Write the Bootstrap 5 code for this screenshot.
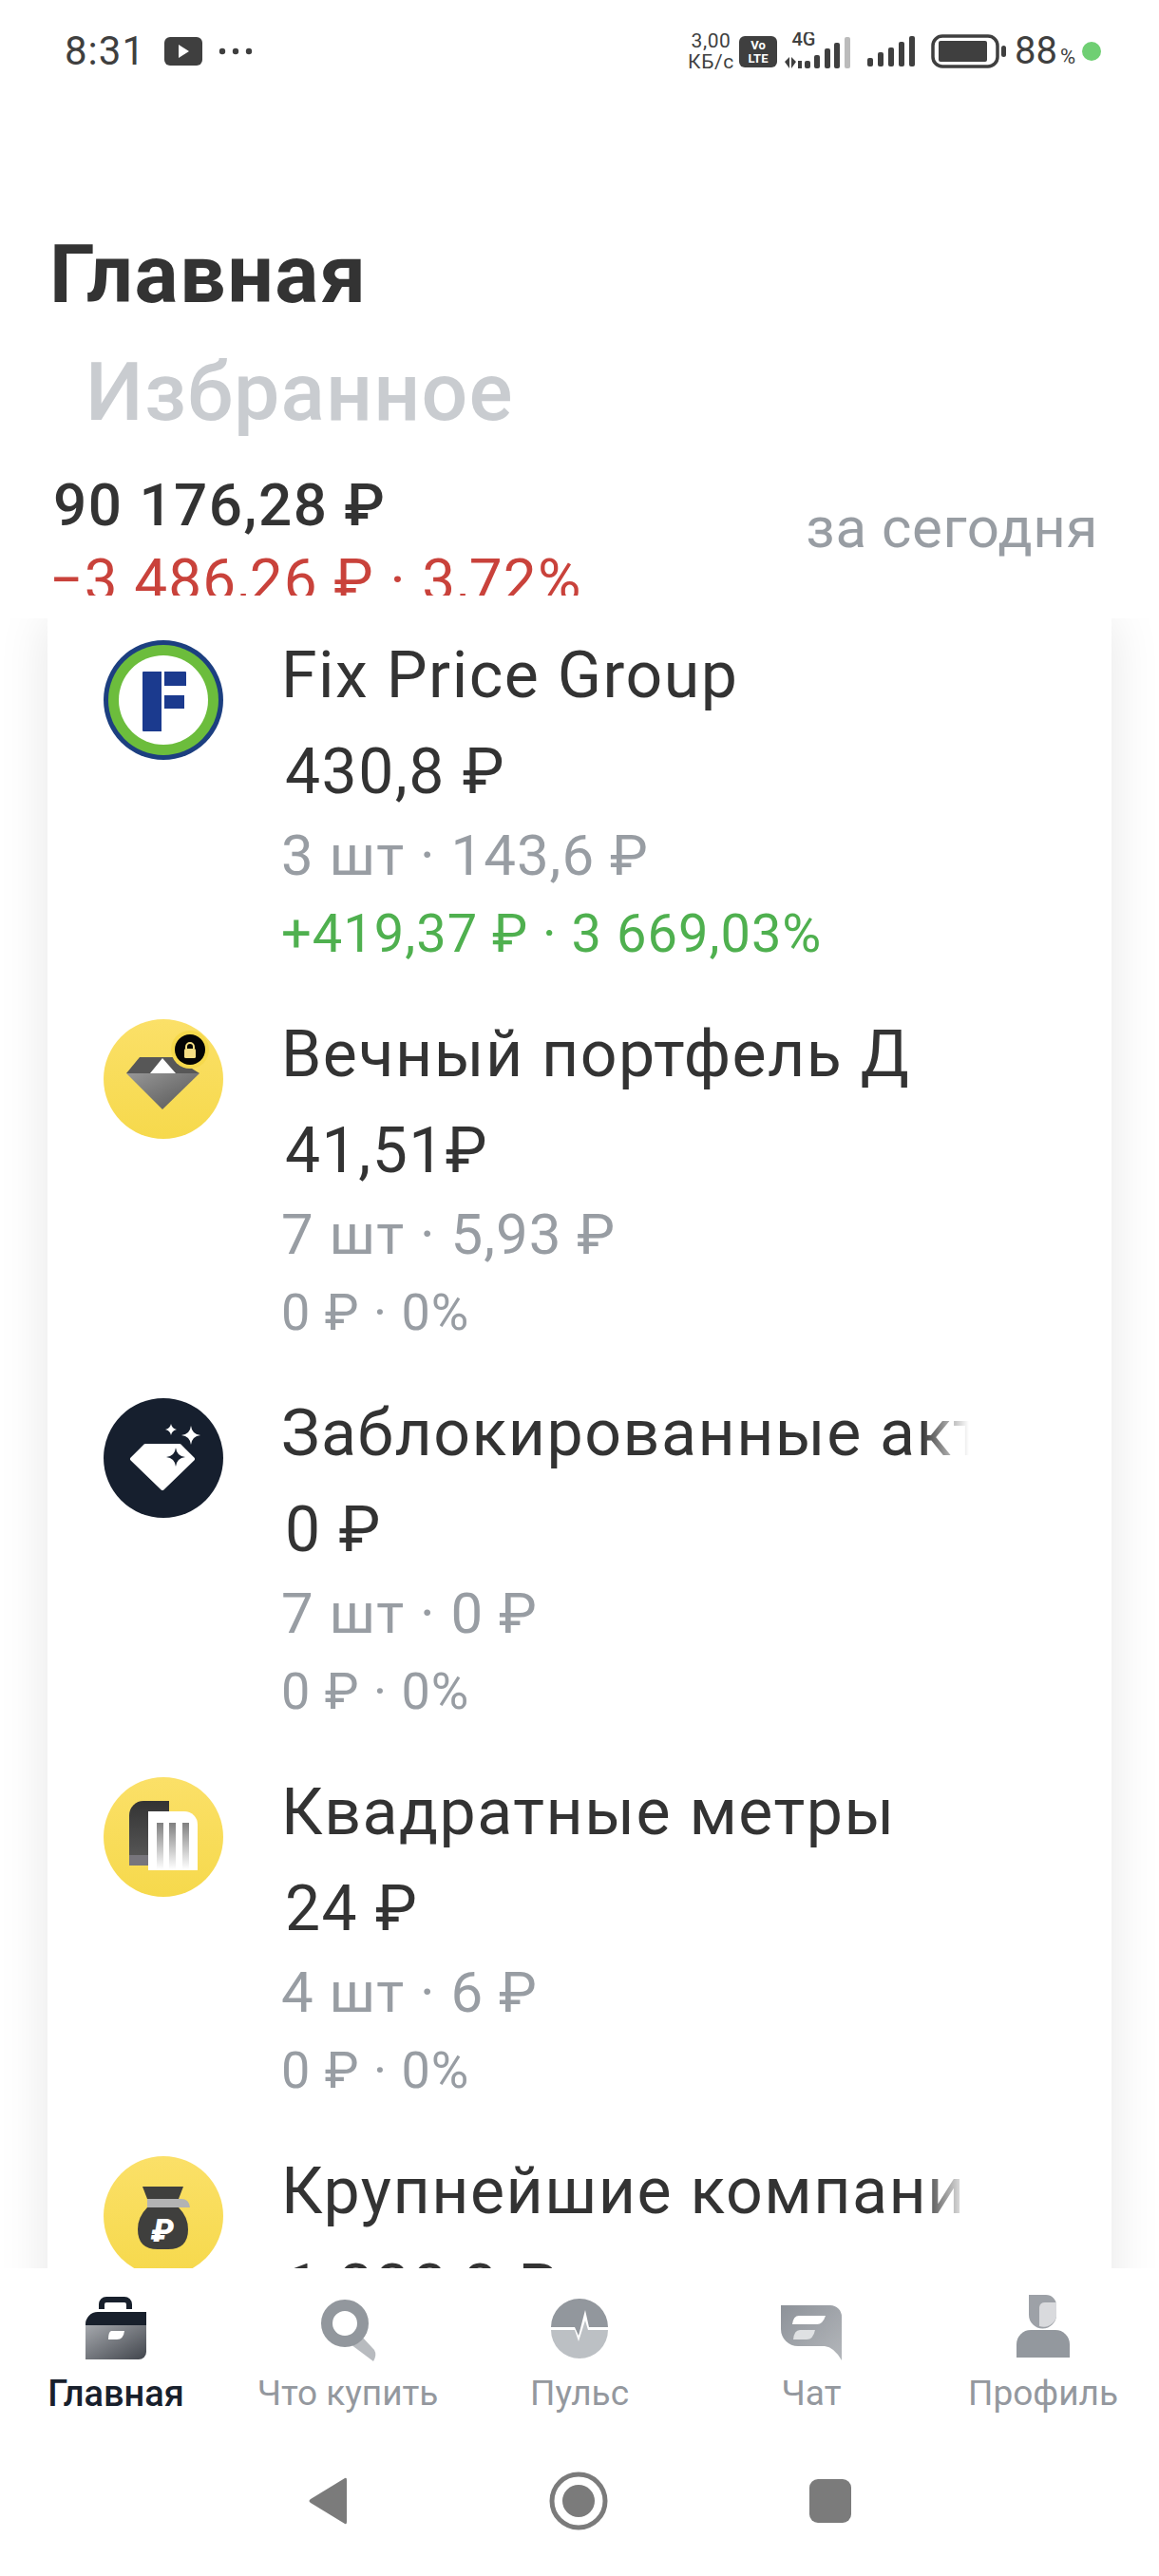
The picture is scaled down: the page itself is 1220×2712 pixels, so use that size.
<!DOCTYPE html>
<html lang="ru">
<head>
  <meta charset="UTF-8" />
  <meta name="viewport" content="width=device-width, initial-scale=1" />
  <title>Главная</title>
  <link href="https://cdn.jsdelivr.net/npm/bootstrap@5.3.0/dist/css/bootstrap.min.css" rel="stylesheet" />
  <style>
    body {
      margin: 0;
      background: #fff;
      font-family: Roboto, "Noto Sans", sans-serif;
      color: #333;
    }
    .app-screen { width: 1220px; height: 2712px; overflow: hidden; }

    .status-bar { height: 108px; padding: 0 61px 0 68px; color: #3f3f3f; }
    .status-time { font-size: 42px; line-height: 1; letter-spacing: 1px; margin-right: 20px; }
    .status-speed { font-size: 21px; line-height: 22px; margin-right: 5px; letter-spacing: .6px; }
    .status-level { font-size: 40px; line-height: 1; margin-left: 8px; }
    .status-level small { font-size: 22px; margin-left: 3px; }
    .status-dot { width: 20px; height: 20px; border-radius: 50%; background: #6fcf73; margin-left: 7px; }

    .page-head { padding: 131px 64px 0 52px; height: 543px; }
    .head-title { font-size: 86px; line-height: 100px; font-weight: 700; margin: 0; color: #333; letter-spacing: 1.5px; }
    .head-tab { font-size: 86px; line-height: 100px; font-weight: 500; margin: 24px 0 34px 38px; color: #c9ccd0; letter-spacing: 1.2px; }
    .sum-block { height: 130px; overflow: hidden; }
    .sum-total { font-size: 62px; line-height: 70px; font-weight: 500; letter-spacing: 1.5px; margin-left: 4px; color: #333; }
    .sum-change { font-size: 62px; line-height: 70px; margin-top: 9px; color: #c9423b; letter-spacing: 1.2px; }
    .sum-period { font-size: 60px; line-height: 70px; color: #989da3; margin-top: 24px; letter-spacing: .6px; }

    .list-area { height: 1737px; overflow: hidden; background: #fff; }
    .list-panel { width: 1120px; margin: 0 auto; border-radius: 0; border: 0; box-shadow: 0 0 50px rgba(0, 0, 0, .1); height: 2100px; }
    .stock-row { height: 399px; padding: 22px 0 0 59px; border: 0; }
    .stock-icon { width: 126px; height: 126px; flex: none; margin: 1px 61px 0 0; display: block; }
    .stock-text { width: 724px; }
    .stock-name {
      font-size: 68px; line-height: 76px; color: #333; white-space: nowrap; overflow: hidden; letter-spacing: 1.5px;
      -webkit-mask-image: linear-gradient(to right, #000 93%, transparent 100%);
      mask-image: linear-gradient(to right, #000 93%, transparent 100%);
    }
    .stock-price { font-size: 66px; line-height: 88px; margin: 20px 0 0 4px; color: #333; letter-spacing: 1.5px; }
    .stock-count { font-size: 60px; line-height: 88px; color: #989da3; letter-spacing: 1px; }
    .stock-gain { font-size: 54px; line-height: 76px; color: #989da3; letter-spacing: 1px; }
    .stock-gain.is-up { font-size: 56px; color: #4fb04f; }

    .tab-bar { height: 324px; background: #fff; position: relative; }
    .tab-items { height: 180px; }
    .tab-item { width: 244px; color: #94989e; font-size: 37px; line-height: 44px; padding-top: 28px; }
    .tab-item.is-active { color: #18202c; font-size: 38px; font-weight: 500; }
    .tab-icon { height: 70px; width: 90px; display: block; margin-bottom: 12px; }
    .sys-nav { height: 144px; padding-bottom: 14px; gap: 212px; }
  </style>
</head>
<body>
  <div class="app-screen d-flex flex-column">

    <div class="status-bar d-flex align-items-center justify-content-between">
      <div class="d-flex align-items-center">
        <span class="status-time">8:31</span>
        <svg width="40" height="30" viewBox="0 0 40 30"><rect width="40" height="30" rx="6" fill="#3f3f3f"/><path d="M15 8l11 7-11 7z" fill="#fff"/></svg>
        <svg class="ms-3" width="38" height="8" viewBox="0 0 38 8"><circle cx="5" cy="4" r="3.2" fill="#3f3f3f"/><circle cx="19" cy="4" r="3.2" fill="#3f3f3f"/><circle cx="33" cy="4" r="3.2" fill="#3f3f3f"/></svg>
      </div>
      <div class="d-flex align-items-center">
        <div class="status-speed text-center">3,00<br />КБ/с</div>
        <svg width="40" height="33" viewBox="0 0 40 33">
          <rect width="40" height="33" rx="6" fill="#3f3f3f"/>
          <text x="20" y="14" text-anchor="middle" font-family="Roboto" font-size="13" font-weight="700" fill="#fff">Vo</text>
          <text x="20" y="28" text-anchor="middle" font-family="Roboto" font-size="13" font-weight="700" fill="#fff">LTE</text>
        </svg>
        <svg class="ms-2" width="70" height="40" viewBox="0 0 70 40" font-family="Roboto">
          <text x="20" y="14" text-anchor="middle" font-size="20" font-weight="500" fill="#3f3f3f">4G</text>
          <path d="M0 31l5-5v12zM7 26l5 5-5 7zM14 30h4v8h-4z" fill="#3f3f3f"/>
          <rect x="21" y="30" width="6" height="8" rx="2" fill="#3f3f3f"/>
          <rect x="31" y="24" width="6" height="14" rx="2" fill="#3f3f3f"/>
          <rect x="42" y="17" width="6" height="21" rx="2" fill="#3f3f3f"/>
          <rect x="52" y="11" width="6" height="27" rx="2" fill="#3f3f3f"/>
          <rect x="63" y="5" width="6" height="33" rx="2" fill="#bbb"/>
        </svg>
        <svg class="ms-3" width="52" height="34" viewBox="0 0 52 34">
          <rect x="1" y="24" width="6" height="9" rx="2" fill="#3f3f3f"/>
          <rect x="12" y="18" width="6" height="15" rx="2" fill="#3f3f3f"/>
          <rect x="23" y="13" width="6" height="20" rx="2" fill="#3f3f3f"/>
          <rect x="34" y="7" width="6" height="26" rx="2" fill="#3f3f3f"/>
          <rect x="45" y="1" width="6" height="32" rx="2" fill="#3f3f3f"/>
        </svg>
        <svg class="ms-3" width="80" height="36" viewBox="0 0 80 36">
          <rect x="2" y="2" width="68" height="32" rx="10" fill="none" stroke="#3f3f3f" stroke-width="3.5"/>
          <rect x="8" y="7" width="51" height="22" rx="2" fill="#3f3f3f"/>
          <rect x="74" y="12" width="5" height="12" rx="2.5" fill="#3f3f3f"/>
        </svg>
        <span class="status-level">88<small>%</small></span>
        <span class="status-dot"></span>
      </div>
    </div>

    <div class="page-head">
      <h1 class="head-title">Главная</h1>
      <div class="head-tab">Избранное</div>
      <div class="d-flex justify-content-between">
        <div class="sum-block">
          <div class="sum-total">90 176,28 ₽</div>
          <div class="sum-change">−3 486,26 ₽ · 3,72%</div>
        </div>
        <div class="sum-period">за сегодня</div>
      </div>
    </div>

    <div class="list-area">
      <div class="card list-panel">
        <div class="list-group list-group-flush">

          <div class="list-group-item stock-row d-flex">
            <svg class="stock-icon" viewBox="0 0 126 126">
              <circle cx="63" cy="63" r="63" fill="#1c3f80"/>
              <circle cx="63" cy="63" r="58" fill="#6cbd3c"/>
              <circle cx="63" cy="63" r="47" fill="#fff"/>
              <path d="M41 34a1 1 0 0 1 1-1h19v63H42a1 1 0 0 1-1-1zM64 33h22a1 1 0 0 1 1 1v14H64zM64 58h21v14H64z" fill="#1b3a8e"/>
            </svg>
            <div class="stock-text">
              <div class="stock-name">Fix Price Group</div>
              <div class="stock-price">430,8 ₽</div>
              <div class="stock-count">3 шт · 143,6 ₽</div>
              <div class="stock-gain is-up">+419,37 ₽ · 3 669,03%</div>
            </div>
          </div>

          <div class="list-group-item stock-row d-flex">
            <svg class="stock-icon" viewBox="0 0 126 126">
              <defs>
                <linearGradient id="yel" x1="0" y1="0" x2="0" y2="1"><stop offset="0" stop-color="#fbe068"/><stop offset="1" stop-color="#f6d94c"/></linearGradient>
                <linearGradient id="dia" x1="0" y1="0" x2="1" y2="1"><stop offset="0" stop-color="#979797"/><stop offset="1" stop-color="#555"/></linearGradient>
              </defs>
              <circle cx="63" cy="63" r="63" fill="url(#yel)"/>
              <path d="M38 40h36l27 17H24z" fill="#575757"/>
              <path d="M24 57h77L62 95z" fill="url(#dia)"/>
              <path d="M62 41l14 16H49z" fill="#fff"/>
              <circle cx="91" cy="32" r="20" fill="#f6d94c"/>
              <circle cx="91" cy="32" r="16" fill="#050505"/>
              <rect x="85" y="31" width="12" height="10" rx="1.5" fill="#f5de85"/>
              <path d="M87 31v-2a4 4 0 0 1 8 0v2" fill="none" stroke="#f5de85" stroke-width="2"/>
            </svg>
            <div class="stock-text">
              <div class="stock-name">Вечный портфель Д</div>
              <div class="stock-price">41,51₽</div>
              <div class="stock-count">7 шт · 5,93 ₽</div>
              <div class="stock-gain">0 ₽ · 0%</div>
            </div>
          </div>

          <div class="list-group-item stock-row d-flex">
            <svg class="stock-icon" viewBox="0 0 126 126">
              <circle cx="63" cy="63" r="63" fill="#161f2e"/>
              <path d="M44 50h36l14 14-32 31-32-31z" fill="#fff" stroke="#fff" stroke-width="4" stroke-linejoin="round"/>
              <path d="M76 52q1 9 10 10-9 1-10 10-1-9-10-10 9-1 10-10z" fill="#161f2e"/>
              <path d="M92 29q1 9 10 10-9 1-10 10-1-9-10-10 9-1 10-10z" fill="#fff"/>
              <path d="M71 27q1 5 6 6-5 1-6 6-1-5-6-6 5-1 6-6z" fill="#fff"/>
            </svg>
            <div class="stock-text">
              <div class="stock-name">Заблокированные активы</div>
              <div class="stock-price">0 ₽</div>
              <div class="stock-count">7 шт · 0 ₽</div>
              <div class="stock-gain">0 ₽ · 0%</div>
            </div>
          </div>

          <div class="list-group-item stock-row d-flex">
            <svg class="stock-icon" viewBox="0 0 126 126">
              <defs>
                <linearGradient id="bldg" x1="0" y1="0" x2="0" y2="1"><stop offset="0" stop-color="#333"/><stop offset="1" stop-color="#555"/></linearGradient>
                <linearGradient id="bar" x1="0" y1="0" x2="0" y2="1"><stop offset="0" stop-color="#808080"/><stop offset="1" stop-color="#fff"/></linearGradient>
              </defs>
              <circle cx="63" cy="63" r="63" fill="url(#yel)"/>
              <path d="M27 40a15 15 0 0 1 15-15h27v57H27z" fill="url(#bldg)"/>
              <rect x="27" y="82" width="30" height="11" fill="#77757c"/>
              <path d="M47 36h38a14 14 0 0 1 14 14v48H47z" fill="#fff"/>
              <rect x="56" y="48" width="7" height="49" fill="url(#bar)"/>
              <rect x="69" y="48" width="7" height="49" fill="url(#bar)"/>
              <rect x="83" y="48" width="7" height="49" fill="url(#bar)"/>
            </svg>
            <div class="stock-text">
              <div class="stock-name">Квадратные метры</div>
              <div class="stock-price">24 ₽</div>
              <div class="stock-count">4 шт · 6 ₽</div>
              <div class="stock-gain">0 ₽ · 0%</div>
            </div>
          </div>

          <div class="list-group-item stock-row d-flex">
            <svg class="stock-icon" viewBox="0 0 126 126">
              <circle cx="63" cy="63" r="63" fill="url(#yel)"/>
              <path d="M41 32h43l-5 13H46z" fill="#3f3f3d"/>
              <path d="M46 45h36q8 0 9 9H46z" fill="#b3b3b3"/>
              <path d="M46 54h33q10 10 10 23 0 21-21 21H57q-21 0-21-21 0-13 10-23z" fill="#3f3f3d"/>
              <text x="62" y="90" text-anchor="middle" font-family="Roboto" font-size="34" font-weight="900" font-style="italic" fill="#fff">₽</text>
            </svg>
            <div class="stock-text">
              <div class="stock-name">Крупнейшие компании</div>
              <div class="stock-price">1 338,8 ₽</div>
            </div>
          </div>

        </div>
      </div>
    </div>

    <div class="tab-bar">
      <div class="tab-items d-flex">
        <div class="tab-item is-active d-flex flex-column align-items-center">
          <svg class="tab-icon" viewBox="0 0 90 70">
            <defs><linearGradient id="brief" x1="0" y1="0" x2="1" y2="1"><stop offset="0" stop-color="#a5a8ad"/><stop offset="1" stop-color="#41454c"/></linearGradient></defs>
            <path d="M30 15v-5a5 5 0 0 1 5-5h19a5 5 0 0 1 5 5v5" fill="none" stroke="#18202c" stroke-width="6"/>
            <path d="M13 32a13 13 0 0 1 13-14h51v14z" fill="#18202c"/>
            <path d="M13 32h64v28a8 8 0 0 1-8 8H13z" fill="url(#brief)"/>
            <path d="M40 38h14q-1 9-8 9h-9q0-8 3-9z" fill="#fff"/>
          </svg>
          Главная
        </div>
        <div class="tab-item d-flex flex-column align-items-center">
          <svg class="tab-icon" viewBox="0 0 90 70">
            <path d="M48 52l12-8 13 14q3 5-1 12z" fill="#b8bbbf"/>
            <circle cx="42" cy="30" r="19" fill="none" stroke="#92979d" stroke-width="12"/>
          </svg>
          Что купить
        </div>
        <div class="tab-item d-flex flex-column align-items-center">
          <svg class="tab-icon" viewBox="0 0 90 70">
            <path d="M15 34a30 30 0 0 1 60 0H55l-4-18-7 27-4-9z" fill="#92979d"/>
            <path d="M15 37h25l4 12 7-22 3 10h21a30 30 0 0 1-60 0z" fill="#bcc0c4"/>
          </svg>
          Пульс
        </div>
        <div class="tab-item d-flex flex-column align-items-center">
          <svg class="tab-icon" viewBox="0 0 90 70">
            <defs><linearGradient id="chat" x1="0" y1="0" x2="1" y2="1"><stop offset="0" stop-color="#8d9299"/><stop offset="1" stop-color="#b4b7bb"/></linearGradient></defs>
            <path d="M13 11h52a12 12 0 0 1 12 12v46q-8-14-18-15H31a18 18 0 0 1-18-18z" fill="url(#chat)"/>
            <path d="M32 22h28q-3 9-9 9H25q1-9 7-9z" fill="#fff"/>
            <path d="M33 37h16q-2 10-9 10H26q1-10 7-10z" fill="#dfe1e3"/>
          </svg>
          Чат
        </div>
        <div class="tab-item d-flex flex-column align-items-center">
          <svg class="tab-icon" viewBox="0 0 90 70">
            <path d="M30 0h18a11 11 0 0 1 11 11v10a14 14 0 0 1-29 0z" fill="#9da1a7"/>
            <path d="M41 13a6 6 0 0 1 6-5h12v15a14 14 0 0 1-18 10z" fill="#d9dadd"/>
            <path d="M17 66V52a15 15 0 0 1 15-15h26a15 15 0 0 1 15 15v14z" fill="#93989e"/>
          </svg>
          Профиль
        </div>
      </div>
      <div class="sys-nav d-flex align-items-center justify-content-center">
        <svg width="42" height="52" viewBox="0 0 42 52"><path d="M39 2L3 24q-3 2 0 4l36 22q2 1 2-2V4q0-3-2-2z" fill="#7b7b7b"/></svg>
        <svg width="62" height="62" viewBox="0 0 62 62"><circle cx="31" cy="31" r="28" fill="none" stroke="#7b7b7b" stroke-width="5"/><circle cx="31" cy="31" r="17" fill="#7b7b7b"/></svg>
        <svg width="44" height="46" viewBox="0 0 44 46"><rect width="44" height="46" rx="9" fill="#7b7b7b"/></svg>
      </div>
    </div>

  </div>
  <script src="https://cdn.jsdelivr.net/npm/bootstrap@5.3.0/dist/js/bootstrap.bundle.min.js"></script>
</body>
</html>
